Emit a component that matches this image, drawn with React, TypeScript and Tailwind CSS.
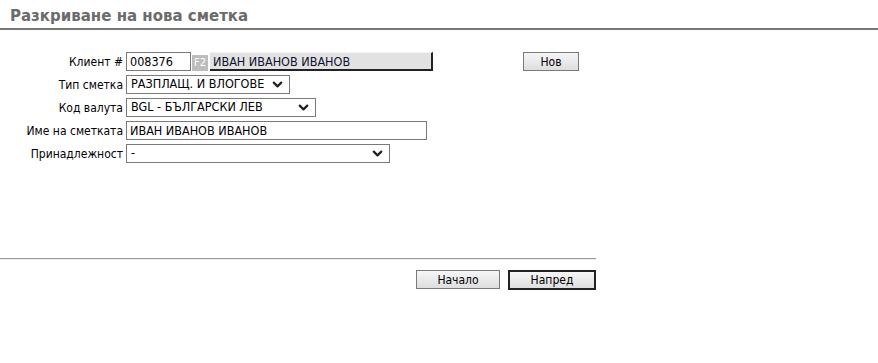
import { ChevronDown } from "lucide-react";

function Select({ value, width }: { value: string; width: string }) {
  return (
    <div className={`${width} h-[19px] border border-[#7a7a7a] bg-white flex items-center justify-between pl-[4px] pr-[4px]`}>
      <span className="text-[12.5px] text-black leading-none whitespace-nowrap">{value}</span>
      <ChevronDown size={15} strokeWidth={3.5} className="text-[#222] shrink-0" />
    </div>
  );
}

function Label({ text }: { text: string }) {
  return <div className="text-right text-[12px] text-black pr-[3px] whitespace-nowrap">{text}</div>;
}

export default function App() {
  return (
    <div className="w-[878px] h-[363px] bg-white font-['DejaVu_Sans_Condensed','DejaVu_Sans',Tahoma,sans-serif]">
      <h1 className="pl-[10px] pt-[7px] text-[15px] font-bold text-[#6b6b6b] leading-[18px] h-[28px] font-['DejaVu_Sans',sans-serif]">
        Разкриване на нова сметка
      </h1>
      <div className="h-[2px] bg-[#777]" />

      <div className="pt-[22px] h-[228px]">
        <div className="grid grid-cols-[126px_1fr] gap-y-[4px] items-center">
          <Label text="Клиент #" />
          <div className="flex items-center h-[19px]">
            <div className="w-[65px] h-[19px] border border-[#7a7a7a] bg-white pl-[3px] text-[12.5px] leading-[17px]">008376</div>
            <div className="ml-[1px] w-[16px] h-[16px] mt-[2px] bg-[#bdbdbd] text-white text-[11px] leading-[16px] text-center">F2</div>
            <div className="ml-[2px] w-[223px] h-[19px] bg-[#e2e2e2] border-t border-t-[#f2f2f2] border-b-2 border-r-2 border-b-[#222] border-r-[#222] pl-[3px] text-[12.5px] leading-[17px] text-[#101030] whitespace-nowrap">
              ИВАН ИВАНОВ ИВАНОВ
            </div>
            <button className="ml-[90px] w-[56px] h-[19px] border border-[#7a7a7a] bg-gradient-to-b from-[#f6f6f6] to-[#dedede] text-[12px] leading-none">
              Нов
            </button>
          </div>

          <Label text="Тип сметка" />
          <Select value="РАЗПЛАЩ. И ВЛОГОВЕ" width="w-[164px]" />

          <Label text="Код валута" />
          <Select value="BGL - БЪЛГАРСКИ ЛЕВ" width="w-[190px]" />

          <Label text="Име на сметката" />
          <div className="w-[301px] h-[19px] border border-[#7a7a7a] bg-white pl-[3px] text-[12.5px] leading-[17px] whitespace-nowrap">ИВАН ИВАНОВ ИВАНОВ</div>

          <Label text="Принадлежност" />
          <Select value="-" width="w-[264px]" />
        </div>
      </div>

      <div className="w-[596px] h-[1px] bg-[#9a9a9a]" />
      <div className="w-[596px] h-[1px] bg-[#ececec]" />

      <div className="w-[596px] flex justify-end gap-[8px] pt-[10px]">
        <button className="w-[84px] h-[19px] border border-[#7a7a7a] bg-gradient-to-b from-[#f6f6f6] to-[#dedede] text-[12px] leading-none">
          Начало
        </button>
        <button className="w-[88px] h-[20px] border-2 border-[#222] bg-gradient-to-b from-[#f6f6f6] to-[#dedede] text-[12px] leading-none">
          Напред
        </button>
      </div>
    </div>
  );
}
